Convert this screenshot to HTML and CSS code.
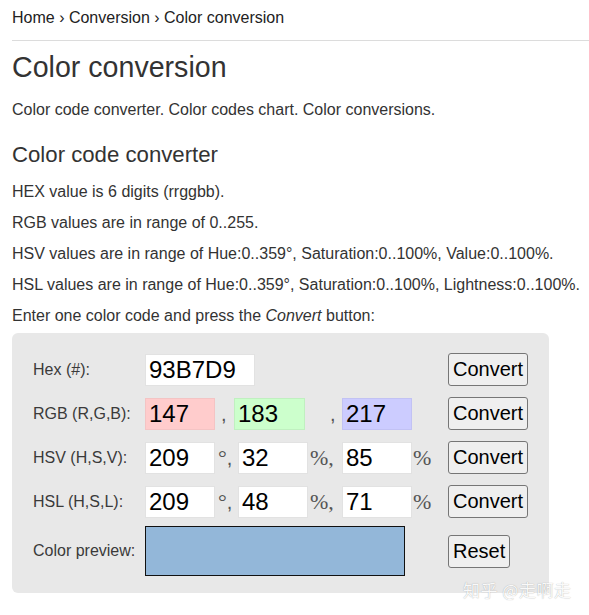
FILE: index.html
```html
<!DOCTYPE html>
<html>
<head>
<meta charset="utf-8">
<title>Color conversion</title>
<link rel="stylesheet" href="styles.css">
</head>
<body>
<div class="page">
  <div class="crumbs"><a href="#">Home</a> › <a href="#">Conversion</a> › Color conversion</div>
  <hr class="rule">
  <h1 class="title">Color conversion</h1>
  <p class="lead">Color code converter. Color codes chart. Color conversions.</p>
  <h2 class="subtitle">Color code converter</h2>
  <p class="info first">HEX value is 6 digits (rrggbb).</p>
  <p class="info">RGB values are in range of 0..255.</p>
  <p class="info">HSV values are in range of Hue:0..359°, Saturation:0..100%, Value:0..100%.</p>
  <p class="info">HSL values are in range of Hue:0..359°, Saturation:0..100%, Lightness:0..100%.</p>
  <p class="info">Enter one color code and press the <i>Convert</i> button:</p>

  <div class="panel">
    <div class="row">
      <div class="label">Hex (#):</div>
      <div class="fields"><input class="field hex" type="text" value="93B7D9"></div>
      <button class="btn">Convert</button>
    </div>
    <div class="row">
      <div class="label">RGB (R,G,B):</div>
      <div class="fields">
        <input class="field red" type="text" value="147"><span class="sep sans w19">,</span><input class="field green" type="text" value="183"><span class="sep sans w37">,</span><input class="field blue" type="text" value="217">
      </div>
      <button class="btn">Convert</button>
    </div>
    <div class="row">
      <div class="label">HSV (H,S,V):</div>
      <div class="fields">
        <input class="field" type="text" value="209"><span class="sep w23">°<span class="sans">,</span></span><input class="field" type="text" value="32"><span class="sep w34">%,</span><input class="field" type="text" value="85"><span class="sep w36">%</span>
      </div>
      <button class="btn">Convert</button>
    </div>
    <div class="row">
      <div class="label">HSL (H,S,L):</div>
      <div class="fields">
        <input class="field" type="text" value="209"><span class="sep w23">°<span class="sans">,</span></span><input class="field" type="text" value="48"><span class="sep w34">%,</span><input class="field" type="text" value="71"><span class="sep w36">%</span>
      </div>
      <button class="btn">Convert</button>
    </div>
    <div class="row preview-row">
      <div class="label">Color preview:</div>
      <div class="fields"><div class="swatch"></div></div>
      <button class="btn">Reset</button>
    </div>
  </div>
</div>
<div class="watermark">知乎 @走啊走</div>
</body>
</html>
```

FILE: styles.css
```css
html, body {
  margin: 0;
  padding: 0;
  background: #fff;
}
body {
  font-family: "Liberation Sans", Arial, sans-serif;
  color: #333;
  font-size: 16px;
  position: relative;
  width: 589px;
  height: 615px;
  overflow: hidden;
}
.page {
  padding-left: 12px;
}
.crumbs {
  padding-top: 6px;
  line-height: 24px;
  font-size: 16px;
  color: #222;
}
.crumbs a {
  color: #222;
  text-decoration: none;
}
.rule {
  margin: 10px 0 0;
  border: 0;
  border-top: 1px solid #dcdcdc;
  height: 0;
}
.title {
  margin: 9px 0 0;
  font-size: 28.6px;
  line-height: 34px;
  font-weight: normal;
  color: #333;
}
.lead {
  margin: 14px 0 0;
  line-height: 24px;
}
.subtitle {
  margin: 19px 0 0;
  font-size: 22.2px;
  line-height: 28px;
  font-weight: normal;
  color: #333;
}
.info {
  margin: 7px 0 0;
  line-height: 24px;
}
.info.first {
  margin-top: 11px;
}
.panel {
  margin-top: 5px;
  width: 537px;
  box-sizing: border-box;
  background: #e8e8e8;
  border-radius: 6px;
  padding: 20px 0 17px 21px;
  display: flex;
  flex-direction: column;
  gap: 11px;
}
.row {
  display: flex;
  align-items: center;
  height: 33px;
}
.preview-row {
  height: 50px;
  margin-top: -3px;
}
.label {
  width: 112px;
  font-size: 16px;
  color: #3a3a3a;
}
.fields {
  width: 303px;
  display: flex;
  align-items: center;
}
.field {
  box-sizing: border-box;
  width: 70px;
  height: 32px;
  border: 1px solid #e2e2e2;
  background: #fff;
  font-family: "Liberation Sans", Arial, sans-serif;
  font-size: 24px;
  color: #000;
  padding: 0 3px;
  margin: 0;
  outline: none;
}
.field.hex {
  width: 110px;
}
.field.red {
  background: #ffcccc;
  border-color: #f4c4c4;
}
.field.green {
  background: #ccffcc;
  width: 71px;
  border-color: #c0f0c0;
}
.field.blue {
  background: #ccccff;
  border-color: #c2c2f4;
}
.sep {
  font-family: "Liberation Serif", "Times New Roman", serif;
  font-size: 22px;
  color: #555;
  line-height: 32px;
  box-sizing: border-box;
}
.sep .sans, .sep.sans {
  font-family: "Liberation Sans", Arial, sans-serif;
  font-size: 20px;
}
.w19 { width: 19px; padding-left: 6px; }
.w37 { width: 37px; padding-left: 25px; }
.w23 { width: 23px; padding-left: 3px; }
.w34 { width: 34px; padding-left: 2px; }
.w36 { width: 36px; padding-left: 1px; }
.btn {
  font-family: "Liberation Sans", Arial, sans-serif;
  font-size: 20px;
  line-height: 23px;
  padding: 4px 4px;
  background: #efefef;
  border: 1px solid #767676;
  border-radius: 3px;
  color: #000;
  margin: 0;
}
.swatch {
  width: 260px;
  height: 50px;
  box-sizing: border-box;
  background: #93b7d9;
  border: 1px solid #111;
}
.watermark {
  position: absolute;
  left: 463px;
  top: 580px;
  font-family: "Noto Sans CJK SC", sans-serif;
  font-size: 17px;
  line-height: 20px;
  letter-spacing: 0.5px;
  color: rgba(255, 255, 255, 0.95);
  text-shadow: 0 0 1px rgba(0, 0, 0, 0.35);
  white-space: nowrap;
}
```
